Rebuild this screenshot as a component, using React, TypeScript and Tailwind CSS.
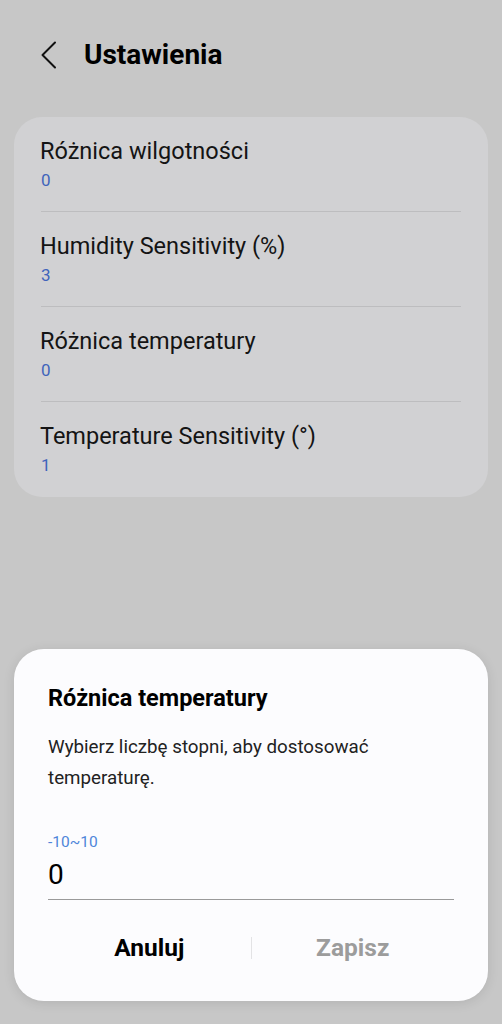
const items = [
  { title: "Różnica wilgotności", value: "0" },
  { title: "Humidity Sensitivity (%)", value: "3" },
  { title: "Różnica temperatury", value: "0" },
  { title: "Temperature Sensitivity (°)", value: "1" },
]

export default function App() {
  return (
    <div
      className="relative flex flex-col w-full h-[1024px] bg-[#c7c7c7] overflow-hidden"
      style={{ fontFamily: "Roboto, 'Noto Sans', sans-serif" }}
    >
      {/* header */}
      <div className="flex items-center h-[110px] pl-[41px]">
        <svg width="16" height="28" viewBox="0 0 16 28" fill="none">
          <polyline
            points="14,1.5 1.5,14 14,26.5"
            stroke="#111"
            strokeWidth="2"
            strokeLinecap="round"
            strokeLinejoin="round"
          />
        </svg>
        <h1 className="ml-[27px] text-[28px] leading-[34px] font-bold text-black">Ustawienia</h1>
      </div>

      {/* settings list */}
      <div className="mx-[14px] mt-[7px] rounded-[28px] bg-[#d1d1d3] px-[27px]">
        {items.map((item, i) => (
          <div
            key={i}
            className={`h-[95px] pt-[21px] ${i < items.length - 1 ? "border-b border-[#bdbdbf]" : ""}`}
          >
            <div className="text-[23.5px] leading-[27px] text-[#141414] -ml-[1px]">{item.title}</div>
            <div className="mt-[5px] text-[17px] leading-[20px] text-[#3f64bb]">{item.value}</div>
          </div>
        ))}
      </div>

      {/* dialog */}
      <div className="mt-auto mb-[23px] mx-[14px] rounded-[30px] bg-[#fcfcfe] px-[34px] pt-[35px] pb-[33px] shadow-[0_2px_12px_rgba(0,0,0,0.10)]">
        <h2 className="text-[23.5px] leading-[28px] font-bold text-black">Różnica temperatury</h2>
        <p className="mt-[20px] text-[18.75px] leading-[31px] text-[#222] pr-[10px]">
          Wybierz liczbę stopni, aby dostosować temperaturę.
        </p>
        <div className="mt-[38px] text-[15.5px] leading-[20px] text-[#4f86da]">-10~10</div>
        <div className="mt-[7px] text-[28px] leading-[32px] text-black pb-[8px] border-b-[1.5px] border-[#9a9a9a]">
          0
        </div>
        <div className="flex items-center mt-[28px] h-[40px]">
          <button className="flex-1 text-[24.5px] font-bold text-black">Anuluj</button>
          <div className="w-px h-[22px] bg-[#e3e3e5]" />
          <button className="flex-1 text-[24.5px] font-bold text-[#9c9c9c]">Zapisz</button>
        </div>
      </div>
    </div>
  )
}
